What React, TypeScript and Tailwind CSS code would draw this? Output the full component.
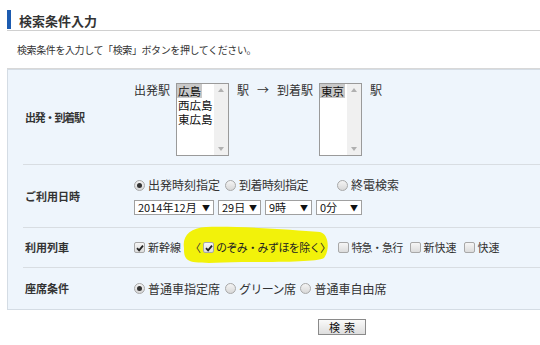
import React from "react";

const font = { fontFamily: '"Noto Sans CJK JP", "Noto Sans", sans-serif' };

function Radio({ checked }: { checked?: boolean }) {
  return (
    <span className="inline-flex items-center justify-center w-[11px] h-[11px] rounded-full border border-[#a8a8a8] bg-gradient-to-b from-[#f4f4f4] to-[#d8d8d8] mr-[2px]">
      {checked && <span className="w-[5px] h-[5px] rounded-full bg-[#333]" />}
    </span>
  );
}

function Check({ checked }: { checked?: boolean }) {
  return (
    <span className="inline-flex items-center justify-center w-[11px] h-[11px] rounded-[2px] border border-[#a8a8a8] bg-gradient-to-b from-[#f6f6f6] to-[#dcdcdc] mr-[2px]">
      {checked && (
        <svg width="8" height="8" viewBox="0 0 8 8">
          <path d="M1 4.2 L3.1 6.3 L7 1.6" stroke="#222" strokeWidth="1.8" fill="none" />
        </svg>
      )}
    </span>
  );
}

function ListBox({ items, w }: { items: string[]; w: number }) {
  return (
    <div className="flex h-[73px] border border-[#9a9a9a] bg-white" style={{ width: w }}>
      <div className="flex-1 flex flex-col items-start text-[11.5px] text-[#111]">
        {items.map((it, i) => (
          <div key={i} className={"h-[14px] leading-[14px] px-[1px] " + (i === 0 ? "bg-[#c9c9c9]" : "")}>
            {it}
          </div>
        ))}
      </div>
      <div className="w-[14px] bg-[#f0f0f0] flex flex-col items-center justify-between py-[4px]">
        <svg width="6" height="4" viewBox="0 0 6 4"><path d="M0 4 L3 0 L6 4Z" fill="#b0b0b0" /></svg>
        <svg width="6" height="4" viewBox="0 0 6 4"><path d="M0 0 L3 4 L6 0Z" fill="#b0b0b0" /></svg>
      </div>
    </div>
  );
}

function Select({ text, w }: { text: string; w: number }) {
  return (
    <div className="flex items-center justify-between h-[15px] border border-[#a0a0a0] bg-white px-[3px] text-[11px] leading-none text-[#111]" style={{ width: w }}>
      <span>{text}</span>
      <span className="text-[8px]">▼</span>
    </div>
  );
}

function Row({ label, h, last, children, top }: { label: React.ReactNode; h: number; last?: boolean; children: React.ReactNode; top?: boolean }) {
  return (
    <div className="ml-[15px]">
      <div className={"flex " + (last ? "" : "border-b border-[#d8dde2]")} style={{ height: h }}>
        <div className="w-[111px] pl-[2px] flex items-center text-[11px] font-bold text-[#333]">{label}</div>
        <div className={"relative flex-1 flex " + (top ? "" : "items-center")}>{children}</div>
      </div>
    </div>
  );
}

export default function App() {
  return (
    <div className="w-[540px] h-[345px] bg-white text-[#333] overflow-hidden" style={font}>
      <div className="pl-[7px] pt-[10px]">
        <div className="flex items-center h-[21px] border-b border-[#d0d0d0]">
          <div className="w-[4px] h-[19px] bg-[#1c5bb0] mb-[1px]" />
          <div className="pl-[8px] text-[13px] font-bold text-[#333] leading-none">検索条件入力</div>
        </div>
        <div className="h-[38px] flex items-center pl-[10px] text-[10px] tracking-[-0.4px] text-[#333] border-b border-[#d8d8d8]">
          検索条件を入力して「検索」ボタンを押してください。
        </div>
        <div className="bg-[#eef5fc] border border-[#d4dce4] border-r-0 h-[241px]">
          <Row label={<span className="tracking-[-1.2px]">出発・到着駅</span>} h={95} top>
            <div className="flex items-start pt-[13px] text-[12px]">
              <span className="leading-[14px] w-[42px]">出発駅</span>
              <ListBox items={["広島", "西広島", "東広島"]} w={53} />
              <span className="leading-[14px] ml-[8px]">駅</span>
              <span className="leading-[14px] ml-[8px]">→</span>
              <span className="leading-[14px] ml-[8px] w-[42px]">到着駅</span>
              <ListBox items={["東京"]} w={43} />
              <span className="leading-[14px] ml-[8px]">駅</span>
            </div>
          </Row>
          <Row label="ご利用日時" h={63}>
            <div className="flex flex-col gap-[9px] pt-[2px]">
              <div className="flex items-center text-[12px] leading-none">
                <Radio checked />
                <span className="w-[78px] pl-[1px]">出発時刻指定</span>
                <Radio />
                <span className="w-[99px] pl-[1px] tracking-[-0.5px]">到着時刻指定</span>
                <Radio />
                <span className="pl-[1px]">終電検索</span>
              </div>
              <div className="flex items-center gap-[4px]">
                <Select text="2014年12月" w={80} />
                <Select text="29日" w={43} />
                <Select text="9時" w={47} />
                <Select text="0分" w={46} />
              </div>
            </div>
          </Row>
          <Row label="利用列車" h={40}>
            <svg className="absolute left-[48px] top-[-2px]" width="148" height="38" viewBox="0 0 148 38">
              <path d="M2 22 C0 10 8 2 24 1 C60 0 110 4 138 6 C147 8 148 24 142 32 C134 36 100 36 60 36 C30 37 12 38 6 34 C2 31 2 27 2 22Z" fill="#f2f20a" />
            </svg>
            <div className="relative flex items-center text-[11px] leading-none">
              <Check checked />
              <span className="pl-[1px] mr-[9px]">新幹線</span>
              <span className="mr-[2px]">〈</span>
              <Check checked />
              <span className="text-[#222] tracking-[-0.6px]">のぞみ・みずほを除く〉</span>
              <span className="w-[8px]" />
              <Check />
              <span className="mr-[8px] tracking-[-0.8px]">特急・急行</span>
              <Check />
              <span className="mr-[8px]">新快速</span>
              <Check />
              <span>快速</span>
            </div>
          </Row>
          <Row label="座席条件" h={41} last>
            <div className="flex items-center text-[12px] leading-none">
              <Radio checked />
              <span className="pl-[1px] mr-[5px]">普通車指定席</span>
              <Radio />
              <span className="pl-[1px] mr-[5px] tracking-[-0.6px]">グリーン席</span>
              <Radio />
              <span className="pl-[1px]">普通車自由席</span>
            </div>
          </Row>
        </div>
        <div className="flex pl-[311px] pt-[9px]">
          <button className="w-[48px] h-[16px] border border-[#8a8a8a] bg-gradient-to-b from-[#fafafa] to-[#dedede] text-[11px] leading-none text-[#111] tracking-[4px] pl-[4px]">検索</button>
        </div>
      </div>
    </div>
  );
}
